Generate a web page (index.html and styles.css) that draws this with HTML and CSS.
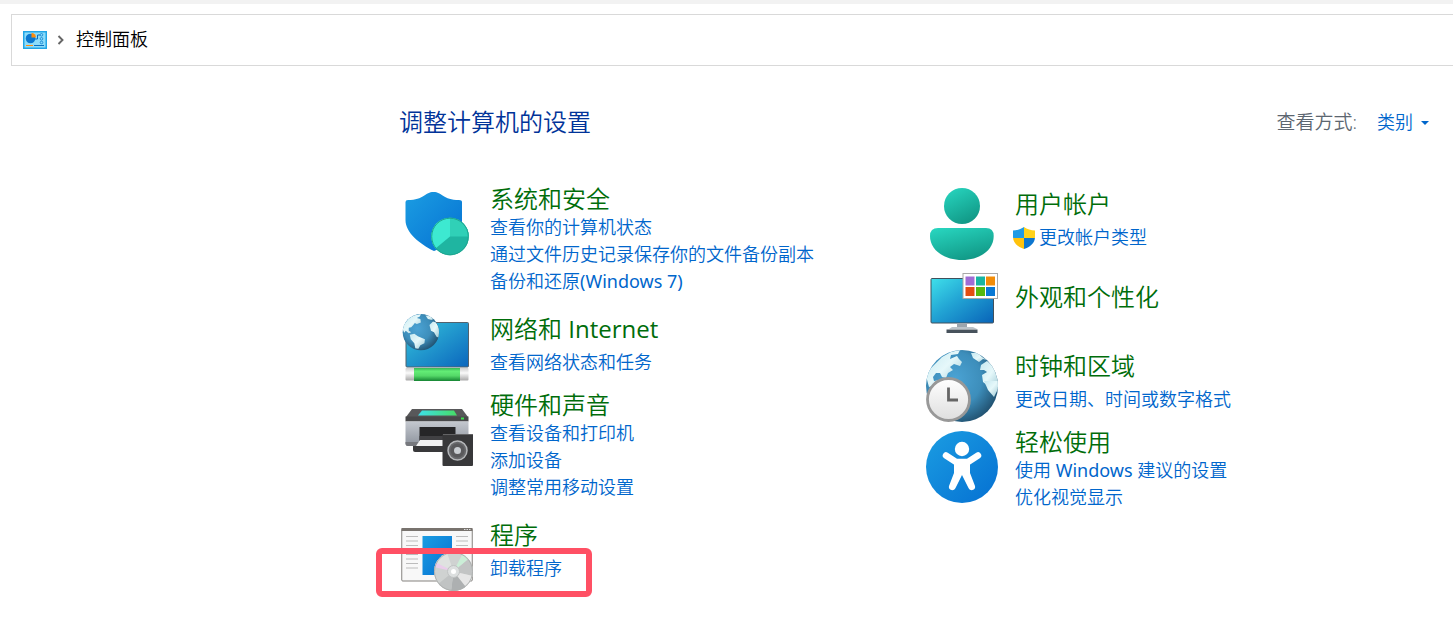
FILE: index.html
```html
<!DOCTYPE html>
<html lang="zh-CN">
<head>
<meta charset="utf-8">
<title>控制面板</title>
<link rel="stylesheet" href="styles.css">
</head>
<body>
<svg width="0" height="0" class="defs" aria-hidden="true">
  <defs>
    <linearGradient id="blue" x1="0" y1="0" x2="1" y2="1"><stop offset="0" stop-color="#1b9de2"/><stop offset="1" stop-color="#0570d2"/></linearGradient>
    <linearGradient id="screen" x1="0" y1="0" x2="1" y2="1"><stop offset="0" stop-color="#3fe0ea"/><stop offset=".45" stop-color="#22a4d4"/><stop offset="1" stop-color="#0863b8"/></linearGradient>
    <linearGradient id="netscreen" x1="0" y1="0" x2="1" y2="1"><stop offset="0" stop-color="#35c4dc"/><stop offset="1" stop-color="#0b66bd"/></linearGradient>
    <linearGradient id="teal" x1=".2" y1="0" x2=".7" y2="1"><stop offset="0" stop-color="#27d3bd"/><stop offset="1" stop-color="#109684"/></linearGradient>
    <radialGradient id="sea" cx=".4" cy=".4" r=".68"><stop offset="0" stop-color="#4ba3d4"/><stop offset=".55" stop-color="#3d8ebb"/><stop offset="1" stop-color="#1d4966"/></radialGradient>
    <linearGradient id="land" x1="0" y1="0" x2="1" y2="1"><stop offset="0" stop-color="#c5e8f0"/><stop offset=".5" stop-color="#e6f8fa"/><stop offset="1" stop-color="#9cc8d4"/></linearGradient>
    <linearGradient id="cable" x1="0" y1="0" x2="0" y2="1"><stop offset="0" stop-color="#38b657"/><stop offset=".25" stop-color="#63ed76"/><stop offset=".6" stop-color="#54d968"/><stop offset="1" stop-color="#158433"/></linearGradient>
    <linearGradient id="plug" x1="0" y1="0" x2="0" y2="1"><stop offset="0" stop-color="#cfcfcf"/><stop offset=".4" stop-color="#fafafa"/><stop offset="1" stop-color="#a9a9a9"/></linearGradient>
    <linearGradient id="case" x1="0" y1="0" x2="0" y2="1"><stop offset="0" stop-color="#c4c8cf"/><stop offset="1" stop-color="#8c929c"/></linearGradient>
    <linearGradient id="panel" x1="0" y1="0" x2="1" y2="0"><stop offset="0" stop-color="#3ddfea"/><stop offset="1" stop-color="#46dc65"/></linearGradient>
    <linearGradient id="dial" x1="0" y1="0" x2="0" y2="1"><stop offset="0" stop-color="#fff"/><stop offset="1" stop-color="#dedede"/></linearGradient>
    <clipPath id="globeclip"><circle cx="36" cy="36" r="36"/></clipPath>
    <clipPath id="discclip"><circle cx="52.500" cy="52.500" r="19.500"/></clipPath>
    <clipPath id="uacclip"><path d="M11 0C14 2 18 3.500 22 3.500V10C22 16 17 20 11 22C5 20 0 16 0 10V3.500C4 3.500 8 2 11 0Z"/></clipPath>
  </defs>
</svg>

<header class="address">
  <svg class="address-icon" viewBox="0 0 24 18" aria-hidden="true">
    <rect x=".75" y=".75" width="22.500" height="16.500" fill="#8cdcfa" stroke="#21a5e6" stroke-width="1.500"/>
    <circle cx="7.500" cy="7.500" r="4.800" fill="#0b78d0"/>
    <path d="M8.500 6.500V2A4.500 4.500 0 0 1 13 6.500Z" fill="#ff8c0a"/>
    <path d="M3 14.500H10" stroke="#ff8c0a"/>
    <path d="M11 14.500H21" stroke="#0c6fc0"/>
    <path d="M12 8H14.500V4H17" fill="none" stroke="#0c6fc0"/>
    <g fill="none" stroke="#1787d4" stroke-width=".9"><circle cx="18.500" cy="3.800" r="1.300"/><circle cx="18.500" cy="7.800" r="1.300"/><circle cx="18.500" cy="11.500" r="1.300"/></g>
  </svg>
  <svg class="chevron" viewBox="0 0 7 10" aria-hidden="true"><path d="M1.500 1L5.500 5L1.500 9" fill="none" stroke="#666" stroke-width="1.900"/></svg>
  <span>控制面板</span>
</header>

<main class="panel">
  <div class="head">
    <h1>调整计算机的设置</h1>
    <div class="view">
      <label for="view">查看方式:</label>
      <span class="picker">
        <select id="view"><option>类别</option><option>大图标</option><option>小图标</option></select>
        <svg class="arrow" viewBox="0 0 8 4" aria-hidden="true"><path d="M0 0H8L4 4Z" fill="#0066cc"/></svg>
      </span>
    </div>
  </div>

  <div class="columns">
    <div class="column">
      <section class="item multi">
        <svg class="icon" viewBox="0 0 72 72" aria-hidden="true">
          <path d="M32.500 4C41 4 42 12 58 12Q61 12 61 14V35C61 47 47 58 33 63C19 56 4.500 45 4.500 32V14Q4.500 12 7 12C23 12 24 4 32.500 4Z" fill="url(#blue)"/>
          <circle cx="49" cy="48.500" r="18.800" fill="#1fb5a1"/>
          <path d="M49 48.500V29.700A18.800 18.800 0 0 0 34.500 60.500Z" fill="#3de9d1"/>
          <path d="M49 48.500V29.700A18.800 18.800 0 0 1 67.800 48.500Z" fill="#30d0b7"/>
          <circle cx="49" cy="48.500" r="18.300" fill="none" stroke="#1da58f"/>
        </svg>
        <div class="text">
          <h2><a href="#">系统和安全</a></h2>
          <a href="#">查看你的计算机状态</a>
          <a href="#">通过文件历史记录保存你的文件备份副本</a>
          <a href="#">备份和还原<span class="latin">(Windows 7)</span></a>
        </div>
      </section>

      <section class="item single">
        <svg class="icon" viewBox="0 0 72 72" aria-hidden="true">
          <rect x="5" y="9.500" width="62.500" height="44.500" rx="1" fill="url(#netscreen)" stroke="#53626d"/>
          <rect x="4.500" y="55" width="63" height="12.500" rx="1" fill="url(#plug)"/>
          <rect x="13" y="55" width="46" height="13" fill="url(#cable)"/>
          <g transform="translate(1.700 1) scale(.505)">
            <circle cx="36" cy="36" r="36" fill="url(#sea)"/>
            <g clip-path="url(#globeclip)" fill="url(#land)">
              <path d="M3 20L12 9L22 3L36 0L34 5L28 8L35 10L36 17L28 20L24 18L21 22L17 26L12 27L12 33L17 36L12 38L6 33L3 37L0 30Z"/>
              <path d="M14 41L23 39L30 44L44 50L43 58L35 62L31 69L25 68L23 58L16 50Z"/>
              <path d="M45 3L54 4L61 10L57 12L50 10Z"/>
              <path d="M53 22L60 15L66 17L72 27L72 47L67 45L62 36L56 33Z"/>
            </g>
          </g>
        </svg>
        <div class="text">
          <h2><a href="#">网络和 <span class="latin">Internet</span></a></h2>
          <a href="#">查看网络状态和任务</a>
        </div>
      </section>

      <section class="item multi">
        <svg class="icon" viewBox="0 0 72 72" aria-hidden="true">
          <path d="M11 15H61L67 23H5Z" fill="#58585a"/>
          <path d="M21 16.500H53L56 21.500H17Z" fill="url(#panel)"/>
          <rect x="4.500" y="22.500" width="63" height="5" fill="#48484a"/>
          <rect x="60" y="23.500" width="3" height="2" fill="#3fe04f"/>
          <path d="M4.500 27.500H67.500V52H7Q4.500 52 4.500 49Z" fill="url(#case)"/>
          <path d="M4.500 48H18V52H7Q4.500 52 4.500 50Z" fill="#77797e"/>
          <rect x="18.500" y="33" width="36" height="14" fill="#262628"/>
          <path d="M18.500 42H54V47H18.500Z" fill="#414144"/>
          <path d="M12 52H46V58H14Q12 58 12 56Z" fill="#39393b"/>
          <path d="M19 46H43V52H15Z" fill="#f2f2f2"/>
          <rect x="41.500" y="40" width="30.500" height="32" rx="1" fill="#38383a"/>
          <path d="M42 40.500H72" stroke="#636365"/>
          <circle cx="56.500" cy="56.500" r="9.500" fill="#68696c" stroke="#b5b7ba" stroke-width="1.500"/>
          <circle cx="56.500" cy="56.500" r="7" fill="#59595c"/>
          <circle cx="56.500" cy="56.500" r="3.500" fill="#c9cdd2"/>
        </svg>
        <div class="text">
          <h2><a href="#">硬件和声音</a></h2>
          <a href="#">查看设备和打印机</a>
          <a href="#">添加设备</a>
          <a href="#">调整常用移动设置</a>
        </div>
      </section>

      <section class="item single">
        <svg class="icon" viewBox="0 0 72 72" aria-hidden="true">
          <rect x=".75" y="9.500" width="70.500" height="52.500" rx="1" fill="#f8f8f8" stroke="#85827f"/>
          <rect x=".5" y="9" width="71" height="3" fill="#78736e"/>
          <path d="M63 10.500H70" stroke="#ddd" stroke-dasharray="1.500 1"/>
          <path d="M5 17.500H17M5 22H17M5 26.500H17M5 31H17M5 35.500H17M5 40H17M5 44.500H17M5 49H17M55 17.500H67M55 22H67M55 26.500H67M55 31H67" stroke="#bcbcbc"/>
          <rect x="21.500" y="17" width="29.500" height="39" fill="url(#blue)"/>
          <g clip-path="url(#discclip)">
            <rect x="32" y="32" width="41" height="41" fill="#cfd2d1"/>
            <path d="M52.500 52.500L30 42L44 28Z" fill="#dfe2e0"/>
            <path d="M52.500 52.500L30 41L29 47Z" fill="#eacdeb"/>
            <path d="M52.500 52.500L63 32L70 38Z" fill="#cbeed7"/>
            <path d="M52.500 52.500L70 38L76 58Z" fill="#c2c4c4"/>
            <path d="M52.500 52.500L76 58L68 72Z" fill="#e6e6e6"/>
            <path d="M52.500 52.500L68 72H50Z" fill="#adb0b1"/>
            <path d="M52.500 52.500L50 74L36 66Z" fill="#c0c3c3"/>
          </g>
          <circle cx="52.500" cy="52.500" r="19" fill="none" stroke="#aeb1b0"/>
          <circle cx="52.500" cy="52.500" r="6" fill="#dcdfdf" stroke="#c0c3c3"/>
          <circle cx="52.500" cy="52.500" r="2.500" fill="#fff"/>
        </svg>
        <div class="text">
          <h2><a href="#">程序</a></h2>
          <a href="#">卸载程序</a>
        </div>
        <span class="highlight"></span>
      </section>
    </div>

    <div class="column second">
      <section class="item single">
        <svg class="icon" viewBox="0 0 72 72" aria-hidden="true">
          <circle cx="36" cy="18" r="18" fill="url(#teal)"/>
          <path d="M12 40H60Q67.700 40 67.700 48C67.700 62 54 72 36 72C18 72 4 62 4 48Q4 40 12 40Z" fill="url(#teal)"/>
        </svg>
        <div class="text">
          <h2><a href="#">用户帐户</a></h2>
          <a href="#" class="guarded">
            <svg class="uac" viewBox="0 0 22 22" aria-hidden="true"><g clip-path="url(#uacclip)"><path d="M0 0H11V11H0Z" fill="#209be5"/><path d="M11 0H22V11H11Z" fill="#ffd21c"/><path d="M0 11H11V22H0Z" fill="#ffc20c"/><path d="M11 11H22V22H11Z" fill="#0d76cf"/></g></svg>
            更改帐户类型
          </a>
        </div>
      </section>

      <section class="item bare">
        <svg class="icon" viewBox="0 0 72 72" aria-hidden="true">
          <rect x="5" y="13.500" width="62.500" height="44.500" rx="1" fill="url(#screen)" stroke="#40505c"/>
          <path d="M31 58.500H41V64H31Z" fill="#9ca5ad"/>
          <path d="M23 64L26 62H47L51 64Z" fill="#bcc3c9"/>
          <rect x="20.500" y="64.500" width="31" height="3.500" fill="#47525c"/>
          <rect x="37" y="8.500" width="34.500" height="25" fill="#fff" stroke="#a8a8a8"/>
          <path d="M39.500 11.500H48.500V20.500H39.500Z" fill="#a06cd5"/>
          <path d="M50 11.500H59V20.500H50Z" fill="#18b5a2"/>
          <path d="M60 11.500H69V20.500H60Z" fill="#f28c08"/>
          <path d="M39.500 22H48.500V31H39.500Z" fill="#e34d12"/>
          <path d="M50 22H59V31H50Z" fill="#55b80d"/>
          <path d="M60 22H69V31H60Z" fill="#0878d4"/>
        </svg>
        <div class="text">
          <h2><a href="#">外观和个性化</a></h2>
        </div>
      </section>

      <section class="item single">
        <svg class="icon" viewBox="0 0 72 72" aria-hidden="true">
          <circle cx="36" cy="36" r="36" fill="url(#sea)"/>
          <g clip-path="url(#globeclip)" fill="url(#land)">
            <path d="M5 18L16 7L25 2L34 0L32 4L25 5L24 9L31 6L33 9L36 12L34 16L28 14L24 17L27 20L22 23L20 28L16 27L14 23L10 23L7 27L8 31L14 30L11 35L3 37L0 26Z"/>
            <path d="M45 3L52 3L56 7L61 10L57 9L53 12L47 8Z"/>
            <path d="M55 15L61 11L67 16L70 23L73 30V36L66 40L61 35L57 32L56 25L61 22L58 20L54 20Z"/>
            <path d="M58 31L72 31L72 39L68 47L62 40Z"/>
          </g>
          <circle cx="22.500" cy="49.500" r="21" fill="url(#dial)" stroke="#989898" stroke-width="2.800"/>
          <path d="M22.500 37.500V50H32" fill="none" stroke="#666" stroke-width="2.800"/>
        </svg>
        <div class="text">
          <h2><a href="#">时钟和区域</a></h2>
          <a href="#">更改日期、时间或数字格式</a>
        </div>
      </section>

      <section class="item multi">
        <svg class="icon" viewBox="0 0 72 72" aria-hidden="true">
          <circle cx="36" cy="36" r="36" fill="url(#blue)"/>
          <circle cx="36" cy="18" r="7.200" fill="#fff"/>
          <path d="M20 24.500L30 31H42L52 24.500" fill="none" stroke="#fff" stroke-width="6.500" stroke-linecap="round" stroke-linejoin="round"/>
          <path d="M28 29H44V42L49 55C50 59 44.500 61 42.500 57L36 44L29.500 57C27.500 61 22 59 23 55L28 42Z" fill="#fff"/>
        </svg>
        <div class="text">
          <h2><a href="#">轻松使用</a></h2>
          <a href="#">使用 <span class="latin">Windows</span> 建议的设置</a>
          <a href="#">优化视觉显示</a>
        </div>
      </section>
    </div>
  </div>
</main>
</body>
</html>
```
FILE: styles.css
```css
* {
  box-sizing: border-box;
}

body {
  margin: 0;
  border-top: 4px solid #f2f2f2;
  background: #fff;
  color: #000;
  font: 350 18px/27px "Open Sans", "Noto Sans CJK SC", sans-serif;
}

.defs {
  position: absolute;
}

a {
  color: #0066cc;
  text-decoration: none;
}

a:hover {
  text-decoration: underline;
}

h1,
h2 {
  margin: 0;
  font-size: 24px;
  line-height: 30px;
  font-weight: inherit;
}

.latin {
  font-family: "Noto Sans", sans-serif;
  font-weight: 400;
  line-height: 1;
}

h2 .latin {
  font-family: "Open Sans", sans-serif;
}

.address {
  display: flex;
  align-items: center;
  margin: 10px 0 0 11px;
  padding: 11px 11px 12px;
  border: 1px solid #d9d9d9;
  border-right: 0;
}

.address-icon {
  width: 24px;
  height: 18px;
}

.chevron {
  width: 7px;
  height: 10px;
  margin: 0 12px 0 10px;
}

.panel {
  padding: 41px 24px 32px 399px;
}

.head {
  display: flex;
  align-items: center;
  justify-content: space-between;
}

h1 {
  color: #003399;
}

.view {
  display: flex;
  align-items: center;
  gap: 20px;
}

.view label {
  color: #5c6670;
  font-size: 19px;
}

.picker {
  position: relative;
  display: flex;
}

.picker select {
  width: 52px;
  padding: 0;
  border: 0;
  background: none;
  color: #0066cc;
  font: inherit;
  appearance: none;
}

.arrow {
  position: absolute;
  top: 12px;
  right: 0;
  width: 8px;
  height: 4px;
  pointer-events: none;
}

.columns {
  display: grid;
  grid-template-columns: 525px 1fr;
  margin-top: 40px;
  padding-left: 2px;
}

.second {
  padding-top: 5px;
}

.item {
  position: relative;
  display: flex;
  gap: 17px;
  padding: 7px 0;
}

.icon {
  flex: none;
  width: 72px;
  height: 72px;
  overflow: visible;
}

.text {
  display: flex;
  flex-direction: column;
  align-items: flex-start;
}

h2 a {
  color: #006d0a;
}

.multi {
  padding-bottom: 12px;
}

.multi .icon {
  margin-top: 4px;
}

.single .icon {
  margin: -1px 0 -9px;
}

.single h2 {
  margin-bottom: 5px;
}

.bare {
  align-items: center;
}

.bare .text {
  padding-bottom: 8px;
}

.guarded {
  display: flex;
  align-items: center;
  gap: 4px;
  margin-left: -2px;
}

.uac {
  width: 22px;
  height: 22px;
}

.highlight {
  position: absolute;
  top: 35px;
  left: -25px;
  width: 216px;
  height: 49px;
  border: 6px solid #ff5064;
  border-radius: 6px;
  pointer-events: none;
}
```
